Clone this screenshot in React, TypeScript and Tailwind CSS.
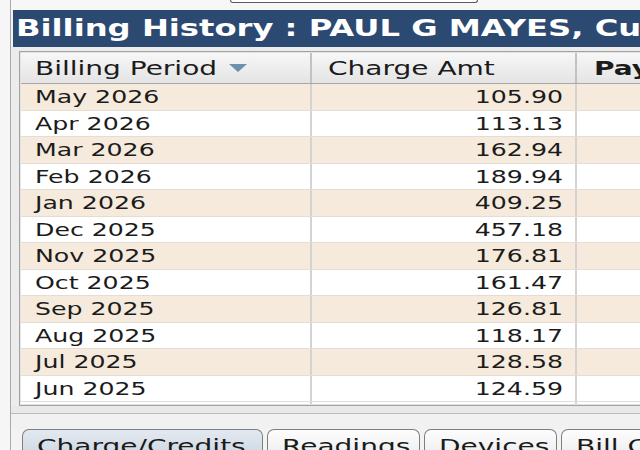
import React from "react";

const rows: [string, string][] = [
  ["May 2026", "105.90"],
  ["Apr 2026", "113.13"],
  ["Mar 2026", "162.94"],
  ["Feb 2026", "189.94"],
  ["Jan 2026", "409.25"],
  ["Dec 2025", "457.18"],
  ["Nov 2025", "176.81"],
  ["Oct 2025", "161.47"],
  ["Sep 2025", "126.81"],
  ["Aug 2025", "118.17"],
  ["Jul 2025", "128.58"],
  ["Jun 2025", "124.59"],
];

const tabs = [
  { label: "Charge/Credits", w: "w-[241px]", active: true },
  { label: "Readings", w: "w-[153px]", active: false },
  { label: "Devices", w: "w-[133px]", active: false },
  { label: "Bill Calc", w: "w-[140px]", active: false },
];

// The legacy client renders its Verdana-style text on a wide raster.
function Wide({
  children,
  origin = "origin-left",
}: {
  children: React.ReactNode;
  origin?: string;
}) {
  return (
    <span className={`inline-block whitespace-nowrap scale-x-[1.4] ${origin}`}>
      {children}
    </span>
  );
}

function SortArrow() {
  return (
    <svg width="20" height="10" viewBox="0 0 20 10">
      <polygon points="1,1 19,1 10,9" fill="#6f8fb0" />
    </svg>
  );
}

export default function App() {
  return (
    <div
      className="w-[640px] h-[450px] overflow-hidden flex bg-[#f3f3f3] text-[#1b1b1b]"
      style={{ fontFamily: '"DejaVu Sans", Verdana, sans-serif' }}
    >
      {/* left frame edge */}
      <div className="w-[11px] shrink-0 bg-[#f6f6f6] border-r border-[#a9a9a9]" />

      <div className="flex-1 min-w-0 flex flex-col">
        {/* bottom edge of the toolbar field above */}
        <div className="h-[10px] shrink-0 flex items-start bg-[#f7f7f7]">
          <div className="ml-[219px] w-[248px] h-[3px] border-b border-x border-[#5a5a5a] rounded-b-[4px] bg-white" />
        </div>

        {/* panel title */}
        <div className="h-[37px] shrink-0 ml-[2px] bg-[#2b4971] overflow-hidden flex items-center pl-[3px]">
          <span className="text-[23px] leading-[37px] font-bold text-white">
            <Wide>Billing History : PAUL G MAYES, Customer</Wide>
          </span>
        </div>

        <div className="h-[4px] shrink-0 bg-[#ececec]" />

        {/* grid */}
        <div className="shrink-0 bg-[#ececec] pl-[8px]">
          <div className="border border-r-0 border-[#a2a2a2]">
            <div className="border border-r-0 border-[#e4e4e4]">
              {/* header */}
              <div className="h-[31px] flex border-b border-[#a8a8a8] bg-gradient-to-b from-[#f7f7f7] to-[#e4e4e4] text-[20px] leading-[30px]">
                <div className="w-[291px] shrink-0 flex items-center pl-[14px] border-r-2 border-[#c2c2c2]">
                  <Wide>Billing Period</Wide>
                  <span className="ml-[63px] flex items-center">
                    <SortArrow />
                  </span>
                </div>
                <div className="w-[265px] shrink-0 flex items-center pl-[16px] border-r-2 border-[#c2c2c2]">
                  <Wide>Charge Amt</Wide>
                </div>
                <div className="flex-1 flex items-center pl-[17px] font-bold overflow-hidden">
                  <Wide>Payment Amt</Wide>
                </div>
              </div>

              {/* rows */}
              {rows.map(([period, amt], i) => (
                <div
                  key={period}
                  className={`h-[26.5px] flex text-[18px] leading-[26px] border-b border-[#e3ddd4] ${
                    i % 2 === 0 ? "bg-[#f5eadc]" : "bg-white"
                  }`}
                >
                  <div className="w-[291px] shrink-0 pl-[14px] border-r-2 border-[#d3d3d3]">
                    <Wide>{period}</Wide>
                  </div>
                  <div className="w-[265px] shrink-0 flex justify-end pr-[12px] border-r-2 border-[#d3d3d3]">
                    <Wide origin="origin-right">{amt}</Wide>
                  </div>
                  <div className="flex-1" />
                </div>
              ))}
              <div className="h-[2px] flex bg-white">
                <div className="w-[291px] shrink-0 border-r-2 border-[#d3d3d3]" />
                <div className="w-[265px] shrink-0 border-r-2 border-[#d3d3d3]" />
              </div>
            </div>
          </div>
        </div>

        <div className="h-[7px] shrink-0 bg-[#e9e9e9]" />
        <div className="h-[16px] shrink-0 border-t border-[#bcbcbc] bg-[#f1f1f1]" />

        {/* detail tabs */}
        <div className="flex gap-[4px] pl-[11px] shrink-0">
          {tabs.map((t) => (
            <div
              key={t.label}
              className={`${t.w} shrink-0 h-[26px] rounded-t-[7px] border border-b-0 border-[#7e7e7e] text-[20px] leading-[24px] pt-[4px] pl-[14px] overflow-hidden ${
                t.active
                  ? "bg-gradient-to-b from-[#e3e9f0] to-[#cfd8e3]"
                  : "bg-gradient-to-b from-[#fdfdfd] to-[#eeeeee]"
              }`}
            >
              <Wide>{t.label}</Wide>
            </div>
          ))}
        </div>
      </div>
    </div>
  );
}
